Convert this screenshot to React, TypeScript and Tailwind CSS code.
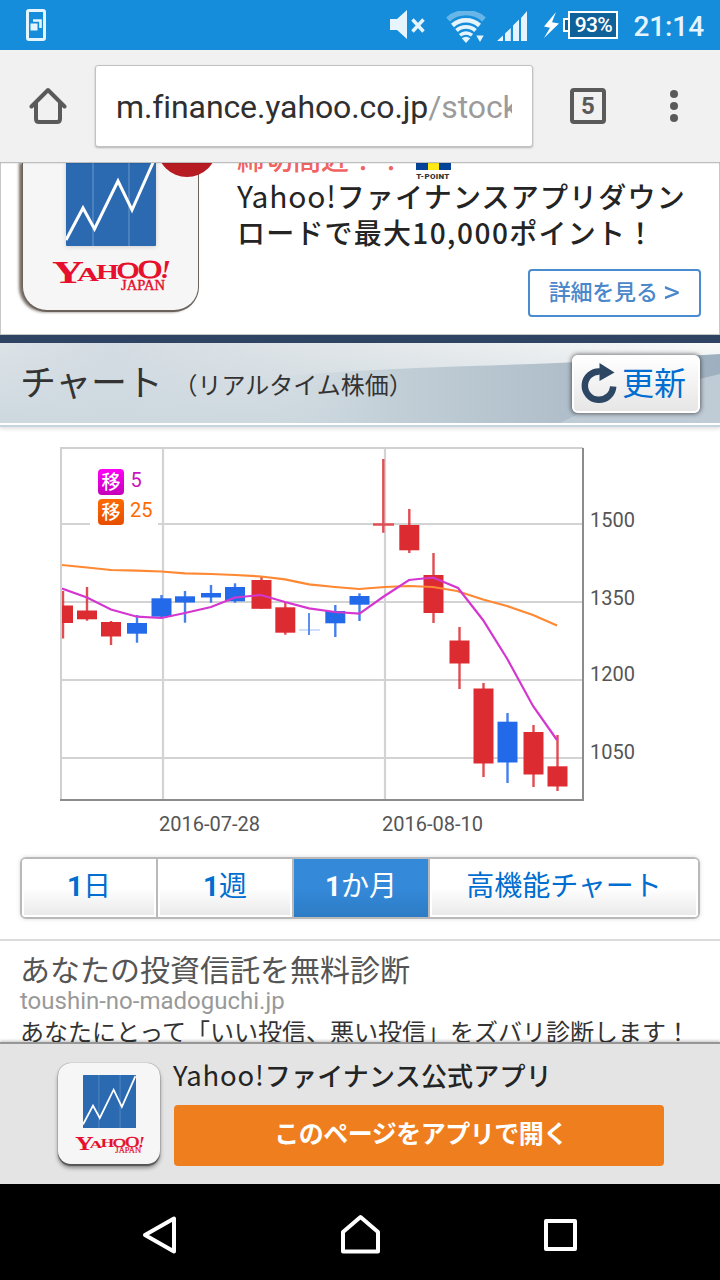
import { useState } from 'react';
import clsx from 'clsx';

type Candle = {
  x: number;
  high: number;
  top: number;
  bottom: number;
  low: number;
  up?: boolean;
};

// plot coordinates of the one month series
const candles: Candle[] = [
  { x: 63, high: 591, top: 605.5, bottom: 623, low: 638.5 },
  { x: 87, high: 587, top: 610.5, bottom: 619.3, low: 620.7 },
  { x: 111, high: 621, top: 622, bottom: 636.5, low: 645 },
  { x: 137, high: 615, top: 623, bottom: 633.7, low: 642.7, up: true },
  { x: 161.5, high: 595, top: 598.3, bottom: 616.7, low: 617.5, up: true },
  { x: 185, high: 591, top: 596.3, bottom: 602.5, low: 622.7, up: true },
  { x: 211, high: 585, top: 593, bottom: 597.5, low: 602.7, up: true },
  { x: 235, high: 583.3, top: 587, bottom: 601.3, low: 602.7, up: true },
  { x: 261.5, high: 576.7, top: 580, bottom: 608.8, low: 608.8 },
  { x: 285.3, high: 602, top: 607.3, bottom: 632.7, low: 634.7 },
  { x: 335.3, high: 605, top: 611, bottom: 623.3, low: 637, up: true },
  { x: 359.5, high: 593.3, top: 596, bottom: 604.7, low: 621, up: true },
  { x: 409.3, high: 509, top: 525, bottom: 550.3, low: 553 },
  { x: 433.5, high: 553, top: 575, bottom: 613, low: 623 },
  { x: 459.5, high: 627, top: 640.5, bottom: 663.5, low: 689 },
  { x: 483.5, high: 683, top: 688.5, bottom: 763.5, low: 777 },
  { x: 507.5, high: 713, top: 721.7, bottom: 762.5, low: 783, up: true },
  { x: 533.5, high: 725, top: 732, bottom: 774.5, low: 787 },
  { x: 557.5, high: 735, top: 766.3, bottom: 786.5, low: 791 },
];

const ma5 =
  '62,588.5 87,597.5 111,609.5 137,616.7 161.5,618 185,613 211,607 235,597.5 261,595 285,602 309,608.3 335,612 359.5,613.7 383,597 409,580 433,577.5 458,588 483,620 507,658.5 533,706 557,740';
const ma25 =
  '62,565 87,567.5 111,570 137,570.7 161,571.5 185,573.3 211,574 235,575 261,576.5 285,579.3 309,584.3 335,587 359,589 385,587 409,586 433,587 457,591 483,599.5 507,606 533,615 557,625.5';

const priceLabels = [
  { y: 527, text: '1500' },
  { y: 605, text: '1350' },
  { y: 681, text: '1200' },
  { y: 759, text: '1050' },
];

const tabs = [
  { id: 'day', num: '1', label: '日', width: 'w-[136px]' },
  { id: 'week', num: '1', label: '週', width: 'w-[136px]' },
  { id: 'month', num: '1', label: 'か月', width: 'w-[136px]' },
  { id: 'advanced', num: '', label: '高機能チャート', width: 'flex-1' },
];

function StatusBar() {
  return (
    <header className="flex h-[50px] shrink-0 items-center bg-[#158ddb] text-[#e6f4fd]">
      <svg className="ml-[26px]" width="20" height="32" viewBox="0 0 20 32" fill="none">
        <rect x="1.5" y="1.5" width="17" height="29" rx="1.5" stroke="currentColor" strokeWidth="3" />
        <rect x="4.5" y="14.5" width="7" height="7" fill="currentColor" />
        <path d="M7 11.5h7.5V19" stroke="currentColor" strokeWidth="2.6" />
      </svg>

      <svg className="ml-auto" width="36" height="30" viewBox="0 0 36 30" fill="none">
        <path d="M0 9h7L17 0v29L7 20H0z" fill="currentColor" />
        <path d="M22.5 9.5l11 12M33.5 9.5l-11 12" stroke="currentColor" strokeWidth="3.4" />
      </svg>

      <svg className="mt-[4px] ml-[20px]" width="40" height="33" viewBox="0 0 40 33" fill="none" stroke="currentColor">
        <path d="M2 8.5a27 27 0 0 1 36 0" strokeWidth="5.5" opacity="0.4" />
        <path d="M6.5 14.5a20 20 0 0 1 27 0" strokeWidth="4.5" />
        <path d="M10.5 19.5a14 14 0 0 1 19 0" strokeWidth="3.8" />
        <path d="M14 24.3a9 9 0 0 1 12 0" strokeWidth="3.4" />
        <path d="M15.8 27.3a7 7 0 0 1 8.4 0L20 32z" fill="currentColor" stroke="none" />
        <path d="M30.3 24.5h7.4L34 31z" fill="currentColor" stroke="none" />
      </svg>

      <svg className="mt-[2px] ml-[11px]" width="31" height="30" viewBox="0 0 31 30" fill="currentColor">
        <path d="M0 30l6-5.5V30zM8 22.5l5.8-5.5v13H8zM16 14.5l6-6V30h-6zM24 7l6-7v30h-6z" />
      </svg>

      <svg className="ml-[14px]" width="18" height="26" viewBox="0 0 18 26" fill="#fff">
        <path d="M14 0L2 14.5l6 1.3L2 26l15-14.5-7-1.3z" />
      </svg>
      <div className="ml-[3px] flex items-center">
        <div className="h-[14px] w-[5px] border-y-2 border-l-2 border-white bg-[#0f6299]" />
        <div className="flex h-[28px] w-[50px] items-center justify-center border-2 border-white bg-[#0f6299] pt-px text-[21px] font-medium tracking-[-0.6px] text-white">
          93%
        </div>
      </div>
      <time className="mr-[16px] ml-[15px] pt-[3px] text-[28px] leading-none font-medium tracking-[-0.1px]">21:14</time>
    </header>
  );
}

function BrowserBar() {
  return (
    <div className="relative z-10 flex h-[113px] shrink-0 items-center border-b border-[#bdbdbd] bg-[#f1f1f1] text-[#5a5a5a] shadow-[0_1px_1px_rgba(0,0,0,0.06)]">
      <svg className="ml-[29px]" width="38" height="38" viewBox="0 0 38 38" fill="none" stroke="currentColor" strokeWidth="4">
        <path d="M2.5 19.5L19 3l16.5 16.5" strokeLinecap="round" strokeLinejoin="round" />
        <path d="M7 16v16q0 3 3 3h18q3 0 3-3V16" />
      </svg>
      <div className="ml-[28px] flex h-[82px] w-[438px] items-center rounded-[3px] border border-[#c2c2c2] bg-white pl-[20px] shadow-[0_1px_2px_rgba(0,0,0,0.25)]">
        <div className="mt-[2px] w-[396px] overflow-hidden text-[32px] leading-[44px] tracking-[-0.1px] whitespace-nowrap text-[#2f2f2f]">
          m.finance.yahoo.co.jp<span className="text-[#9b9b9b]">/stocks</span>
        </div>
      </div>
      <div className="ml-[37px] flex size-[36px] items-center justify-center rounded-[4px] border-4 border-current text-[24px] leading-none font-bold">
        5
      </div>
      <div className="ml-[64px] flex flex-col gap-[4px]">
        <span className="size-[8px] rounded-full bg-current" />
        <span className="size-[8px] rounded-full bg-current" />
        <span className="size-[8px] rounded-full bg-current" />
      </div>
    </div>
  );
}

function YahooMark({ className }: { className?: string }) {
  return (
    <svg className={clsx('overflow-visible', className)} viewBox="0 0 118 32" fill="#e60f2d" fontFamily="'Liberation Serif', serif" fontWeight="bold">
      <text x="0" y="23" fontSize="31" textLength="32" lengthAdjust="spacingAndGlyphs">Y</text>
      <text x="25" y="21" fontSize="19" textLength="22" lengthAdjust="spacingAndGlyphs">A</text>
      <text x="44" y="18.5" fontSize="21" textLength="23" lengthAdjust="spacingAndGlyphs">H</text>
      <text x="65" y="18" fontSize="23" fontWeight="normal" stroke="#e60f2d" strokeWidth="1" textLength="22" lengthAdjust="spacingAndGlyphs">O</text>
      <text x="86" y="18" fontSize="25" fontWeight="normal" stroke="#e60f2d" strokeWidth="1" textLength="24" lengthAdjust="spacingAndGlyphs">O</text>
      <text x="108" y="18" fontSize="26" fontStyle="italic" textLength="11" lengthAdjust="spacingAndGlyphs">!</text>
      <text x="69" y="29.5" fontSize="14" fontWeight="normal" stroke="#e60f2d" strokeWidth="0.4" textLength="44" lengthAdjust="spacingAndGlyphs">JAPAN</text>
    </svg>
  );
}

function StockTile({ className }: { className?: string }) {
  return (
    <svg className={className} viewBox="0 0 90 90" fill="none">
      <rect width="90" height="90" rx="1" fill="#2b69b0" />
      <path d="M27 0v90M63 0v90" stroke="#5588c2" strokeWidth="1.6" />
      <path d="M0 84L17 52l11.5 21L52 25l14 29L89 2" stroke="#fff" strokeWidth="3" />
    </svg>
  );
}

function AppBanner() {
  return (
    <section className="flex h-[172px] shrink-0 overflow-hidden border-x border-b border-[#c9c9c9] bg-white">
      <div className="relative ml-[21px] h-[149px] w-[177px] shrink-0 rounded-b-[25px] border-r border-b-2 border-l border-[#6b625c] bg-[#f6f6f6] shadow-[-3px_0_3px_rgba(60,45,35,0.7)]">
        <StockTile className="mt-[-7px] ml-[43px] size-[90px] drop-shadow-sm" />
        <YahooMark className="mt-[14px] ml-[29px] h-[32px] w-[118px]" />
        <div className="absolute top-[-46px] left-[134px] size-[60px] rounded-full bg-[#b71c22]" />
      </div>
      <div className="ml-[38px] flex w-[464px] flex-col">
        <div className="mt-[-16px] flex h-[33px]">
          <p className="mt-[-4px] text-[28px] leading-[36px] font-medium whitespace-nowrap text-[#f16464]">締切間近！！</p>
          <div className="ml-[10px] flex w-[36px] flex-col items-center">
            <div className="flex h-[23px] w-[35px] shrink-0">
              <span className="w-[12px] bg-[#06449a]" />
              <span className="w-[11px] bg-[#ffea16]" />
              <span className="w-[12px] bg-[#06449a]" />
            </div>
            <span className="mt-[3px] text-[8px] leading-[8px] font-black tracking-[0.3px] whitespace-nowrap text-[#333]">T-POINT</span>
          </div>
        </div>
        <p className="h-[74px] text-[28px] leading-[36px] font-medium tracking-[1.2px] whitespace-nowrap text-[#242424]">
          <span className="font-['Noto_Sans_CJK_JP'] text-[30px] leading-none font-normal tracking-[0.8px]">Yahoo!</span>ファイナンスアプリダウン
          <br />
          ロードで最大
          <span className="font-['Noto_Sans_CJK_JP'] leading-none tracking-[1.5px]">10,000</span>
          ポイント！
        </p>
        <button className="mt-[15px] ml-auto h-[48px] w-[173px] shrink-0 rounded-[4px] border-2 border-[#4b8bcf] pr-[4px] text-[22px] leading-none font-medium tracking-[-0.2px] whitespace-nowrap text-[#4b87cb]">
          詳細を見る <span className="inline-block scale-x-150 scale-y-130 pl-[2px] font-normal">&gt;</span>
        </button>
      </div>
    </section>
  );
}

function RefreshIcon() {
  return (
    <svg width="36" height="42" viewBox="0 0 36 42" fill="none">
      <path d="M19 8.5A14.2 14.2 0 1 0 32.2 23.5" stroke="#2c4663" strokeWidth="6.5" />
      <path d="M18.5 0v18L33.5 9.5z" fill="#2c4663" />
    </svg>
  );
}

function ChartHeading() {
  return (
    <div className="relative flex h-[92px] shrink-0 items-start border-t-8 border-[#2f4463] bg-[#cdd8df] shadow-[0_2px_4px_rgba(0,0,0,0.12)]">
      <svg className="absolute inset-x-0 top-0" width="720" height="84" viewBox="0 0 720 84" preserveAspectRatio="none">
        <defs>
          <linearGradient id="sky" x1="0" x2="1" y1="0" y2="0">
            <stop offset="0" stopColor="#dce3e7" />
            <stop offset="0.15" stopColor="#d4dce3" />
            <stop offset="0.5" stopColor="#e2e7e9" />
            <stop offset="1" stopColor="#fafafa" />
          </linearGradient>
          <linearGradient id="haze" x1="0" x2="0" y1="0" y2="1">
            <stop offset="0" stopColor="#cdd8df" stopOpacity="0" />
            <stop offset="1" stopColor="#cdd8df" />
          </linearGradient>
          <linearGradient id="hill" x1="0" x2="1" y1="0" y2="0">
            <stop offset="0" stopColor="#cdd8df" stopOpacity="0" />
            <stop offset="0.3" stopColor="#c2cfd7" />
            <stop offset="0.7" stopColor="#aebdc9" />
            <stop offset="1" stopColor="#9eb0bf" />
          </linearGradient>
        </defs>
        <rect width="720" height="80" fill="url(#sky)" />
        <rect width="720" height="80" fill="url(#haze)" />
        <path d="M250 36Q360 26 470 23T720 11V80H250z" fill="url(#hill)" />
        <path d="M600 60L720 31V80H560z" fill="#bfcbd5" />
        <rect y="80" width="720" height="2" fill="#fff" />
        <rect y="82" width="720" height="2" fill="#c6d4de" />
      </svg>
      <h2 className="relative mt-[13px] ml-[20px] flex items-center leading-[52px] font-normal whitespace-nowrap text-[#333]">
        <span className="text-[36px] tracking-[-0.3px]">チャート</span>
        <span className="ml-[11px] pt-[4px] text-[24px]">（リアルタイム株価）</span>
      </h2>
      <button className="relative mt-[12px] mr-[20px] ml-auto flex h-[58px] w-[128px] items-center rounded-[6px] border-2 border-white bg-linear-to-b from-white to-[#e6e6e6] pl-[7px] text-[32px] text-[#006dd0] shadow-[0_0_4px_1px_rgba(0,0,0,0.5)]">
        <RefreshIcon />
        <span className="ml-[5px] leading-none">更新</span>
      </button>
    </div>
  );
}

function LegendBadge({ y, from, to, id }: { y: number; from: string; to: string; id: string }) {
  return (
    <g>
      <linearGradient id={id} x1="0" x2="0" y1="0" y2="1">
        <stop offset="0" stopColor={from} />
        <stop offset="1" stopColor={to} />
      </linearGradient>
      <rect x="98" y={y} width="26" height="26" rx="4" fill={`url(#${id})`} />
      <text x="111" y={y + 20} fontSize="19" fontWeight="500" fill="#fff" textAnchor="middle">
        移
      </text>
    </g>
  );
}

function StockChart() {
  return (
    <svg className="mt-[20px] ml-[60px] shrink-0" width="600" height="392" viewBox="60 447 600 392" fontSize="20">
      <path d="M62 524H582M62 602H582M62 680H582M62 758H582M163 448V799M385 448V799" stroke="#d3d3d3" strokeWidth="2.2" />
      <path d="M61 801V448H583" fill="none" stroke="#d0d0d0" strokeWidth="2" />
      <path d="M60 800H583V448" fill="none" stroke="#8c8c8c" strokeWidth="2" />
      <rect x="90" y="462" width="68" height="64" fill="#fff" />

      <clipPath id="plot">
        <rect x="62" y="449" width="520" height="350" />
      </clipPath>
      <g clipPath="url(#plot)">
        {candles.map((c) => {
          const color = c.up ? '#236aea' : '#dc2c32';
          return (
            <g key={c.x} fill={color}>
              <rect x={c.x - 1.2} y={c.high} width="2.4" height={c.low - c.high} opacity="0.85" />
              <rect x={c.x - 10} y={c.top} width="20" height={c.bottom - c.top} />
            </g>
          );
        })}
        {/* sessions that closed at the open */}
        <path d="M299 630H320" stroke="#cfdffb" strokeWidth="2" />
        <path d="M309 613V635" stroke="#5a8ff0" strokeWidth="2" />
        <path d="M383.3 459V532.7M373 524.5H394" stroke="#e05055" strokeWidth="2.4" />
        <polyline points={ma25} fill="none" stroke="#ff8833" strokeWidth="2.2" />
        <polyline points={ma5} fill="none" stroke="#d437d0" strokeWidth="2.2" />
      </g>

      <LegendBadge id="ma5" y={469} from="#ff00f6" to="#c400b8" />
      <LegendBadge id="ma25" y={499} from="#ff6a00" to="#e64e00" />
      <text x="130.5" y="487" fill="#c815c0">5</text>
      <text x="130" y="517" fill="#ff6a00">25</text>

      <g fill="#555">
        {priceLabels.map((l) => (
          <text key={l.text} x="590" y={l.y}>
            {l.text}
          </text>
        ))}
        <text x="159" y="831">2016-07-28</text>
        <text x="382" y="831">2016-08-10</text>
      </g>
    </svg>
  );
}

function RangeTabs() {
  const [active, setActive] = useState('month');

  return (
    <div className="mx-[20px] mt-[18px] flex h-[62px] shrink-0 divide-x-2 divide-[#b9b9b9] overflow-hidden rounded-[6px] border-2 border-[#b9b9b9] shadow-[0_0_4px_rgba(0,0,0,0.15)]">
      {tabs.map((tab) => (
        <button
          key={tab.id}
          onClick={() => setActive(tab.id)}
          className={clsx(
            'flex items-center justify-center pb-[3px] text-[28px] leading-none',
            tab.width,
            active === tab.id
              ? 'bg-linear-to-b from-[#348ad9] from-50% to-[#2d7bc4] text-white'
              : 'bg-linear-to-b from-white from-50% to-[#e8e8e8] text-[#006dd0] shadow-[inset_0_0_0_2px_#fff]'
          )}
        >
          {tab.num && <b>{tab.num}</b>}
          {tab.label}
        </button>
      ))}
    </div>
  );
}

function TextAd() {
  return (
    <section className="mt-[20px] h-[103px] shrink-0 overflow-hidden border-t-2 border-[#dcdcdc] pl-[20px] whitespace-nowrap">
      <h3 className="mt-[11px] text-[30px] leading-[38px] font-normal text-[#555]">あなたの投資信託を無料診断</h3>
      <p className="mt-[-1px] text-[24px] leading-[24px] text-[#999]">toushin-no-madoguchi.jp</p>
      <p className="mt-[2px] text-[24px] leading-[36px] text-[#333]">あなたにとって「いい投信、悪い投信」をズバリ診断します！</p>
    </section>
  );
}

function OpenInApp() {
  return (
    <section className="relative flex h-[142px] shrink-0 border-t-2 border-[#969696] bg-[#e4e4e4] shadow-[0_-1px_3px_rgba(0,0,0,0.25)]">
      <div className="mt-[19px] ml-[58px] h-[101px] w-[102px] rounded-[13px] bg-[#f6f6f6] shadow-[0_0_1px_#555,0_2px_1px_#555,0_4px_4px_rgba(0,0,0,0.4)]">
        <StockTile className="mt-[12px] ml-[25px] size-[53px]" />
        <YahooMark className="mt-[8px] ml-[17px] h-[19px] w-[69px]" />
      </div>
      <div className="ml-[14px] flex w-[490px] flex-col">
        <h3 className="mt-[15px] -ml-px h-[35px] text-[26px] leading-[36px] font-medium tracking-[0.2px] whitespace-nowrap text-[#242424]">
          <span className="font-['Noto_Sans_CJK_JP'] text-[27.5px] leading-none font-normal tracking-[0.8px]">Yahoo!</span>ファイナンス公式アプリ
        </h3>
        <button className="mt-[11px] h-[61px] rounded-[4px] bg-[#ef7e1e] pb-[3px] pl-[4px] text-[25px] leading-none font-bold tracking-[-0.5px] text-white">
          このページをアプリで開く
        </button>
      </div>
    </section>
  );
}

function NavigationBar() {
  return (
    <nav className="flex h-[96px] shrink-0 items-center bg-black">
      <svg className="mt-[6px] ml-[142px]" width="36" height="40" viewBox="0 0 36 40" fill="none" stroke="#fff" strokeWidth="4">
        <path d="M3 20L32 3.5v33z" strokeLinejoin="round" />
      </svg>
      <svg className="mt-[4px] ml-[162px]" width="42" height="42" viewBox="0 0 42 42" fill="none" stroke="#fff" strokeWidth="4">
        <path d="M3 38.5V19L20.5 4 38 19v19.5z" strokeLinejoin="round" />
      </svg>
      <div className="mt-[6px] ml-[162px] h-[32px] w-[33px] rounded-[2px] border-4 border-white" />
    </nav>
  );
}

export default function App() {
  return (
    <main className="flex h-[1280px] w-[720px] flex-col overflow-hidden bg-white font-['Roboto','Noto_Sans_CJK_JP',sans-serif]">
      <StatusBar />
      <BrowserBar />
      <AppBanner />
      <ChartHeading />
      <StockChart />
      <RangeTabs />
      <TextAd />
      <OpenInApp />
      <NavigationBar />
    </main>
  );
}
